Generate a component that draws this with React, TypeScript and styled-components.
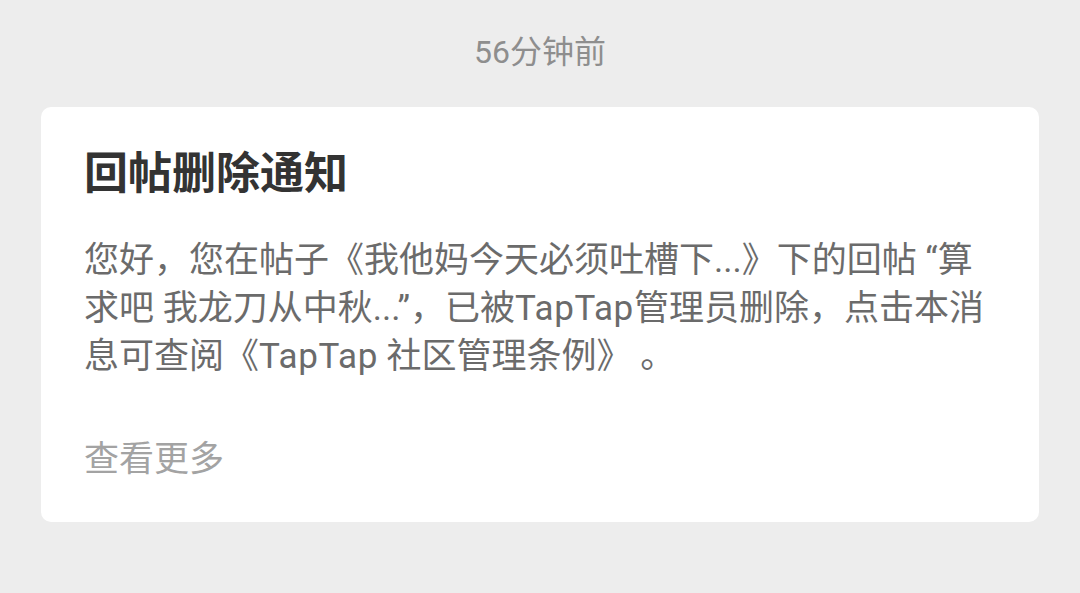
import React from "react";
import styled, { createGlobalStyle } from "styled-components";

const Global = createGlobalStyle`
  html, body {
    margin: 0;
    padding: 0;
    background: #ededed;
  }
  body {
    font-family: Roboto, "Noto Sans CJK SC", "Noto Sans", sans-serif;
    -webkit-font-smoothing: antialiased;
  }
`;

const Page = styled.div`
  width: 1080px;
  height: 593px;
  box-sizing: border-box;
  padding: 32px 41px 0;
  display: flex;
  flex-direction: column;
  align-items: stretch;
`;

const Time = styled.div`
  text-align: center;
  font-size: 32px;
  line-height: 40px;
  color: #8e8e8e;
  margin-bottom: 35px;
`;

const Card = styled.div`
  background: #ffffff;
  border-radius: 10px;
  padding: 37px 43px 38px;
  display: flex;
  flex-direction: column;
`;

const Title = styled.div`
  font-size: 44px;
  line-height: 52px;
  font-weight: 700;
  color: #333333;
  margin-bottom: 41px;
  font-family: "Noto Sans CJK SC", sans-serif;
`;

const Body = styled.div`
  font-size: 35px;
  line-height: 48px;
  color: #6b6b6b;
`;

const Line = styled.div`
  white-space: nowrap;
`;

const Brand = styled.span`
  letter-spacing: 0.6px;
`;

const More = styled.div`
  margin-top: 55px;
  font-size: 35px;
  line-height: 48px;
  color: #a3a3a3;
`;

export default function App() {
  return (
    <>
      <Global />
      <Page>
        <Time>56分钟前</Time>
        <Card>
          <Title>回帖删除通知</Title>
          <Body>
            <Line>您好，您在帖子《我他妈今天必须吐槽下...》下的回帖 “算</Line>
            <Line>
              求吧 我龙刀从中秋...”，已被<Brand>TapTap</Brand>管理员删除，点击本消
            </Line>
            <Line>
              息可查阅《<Brand>TapTap</Brand> 社区管理条例》 。
            </Line>
          </Body>
          <More>查看更多</More>
        </Card>
      </Page>
    </>
  );
}
